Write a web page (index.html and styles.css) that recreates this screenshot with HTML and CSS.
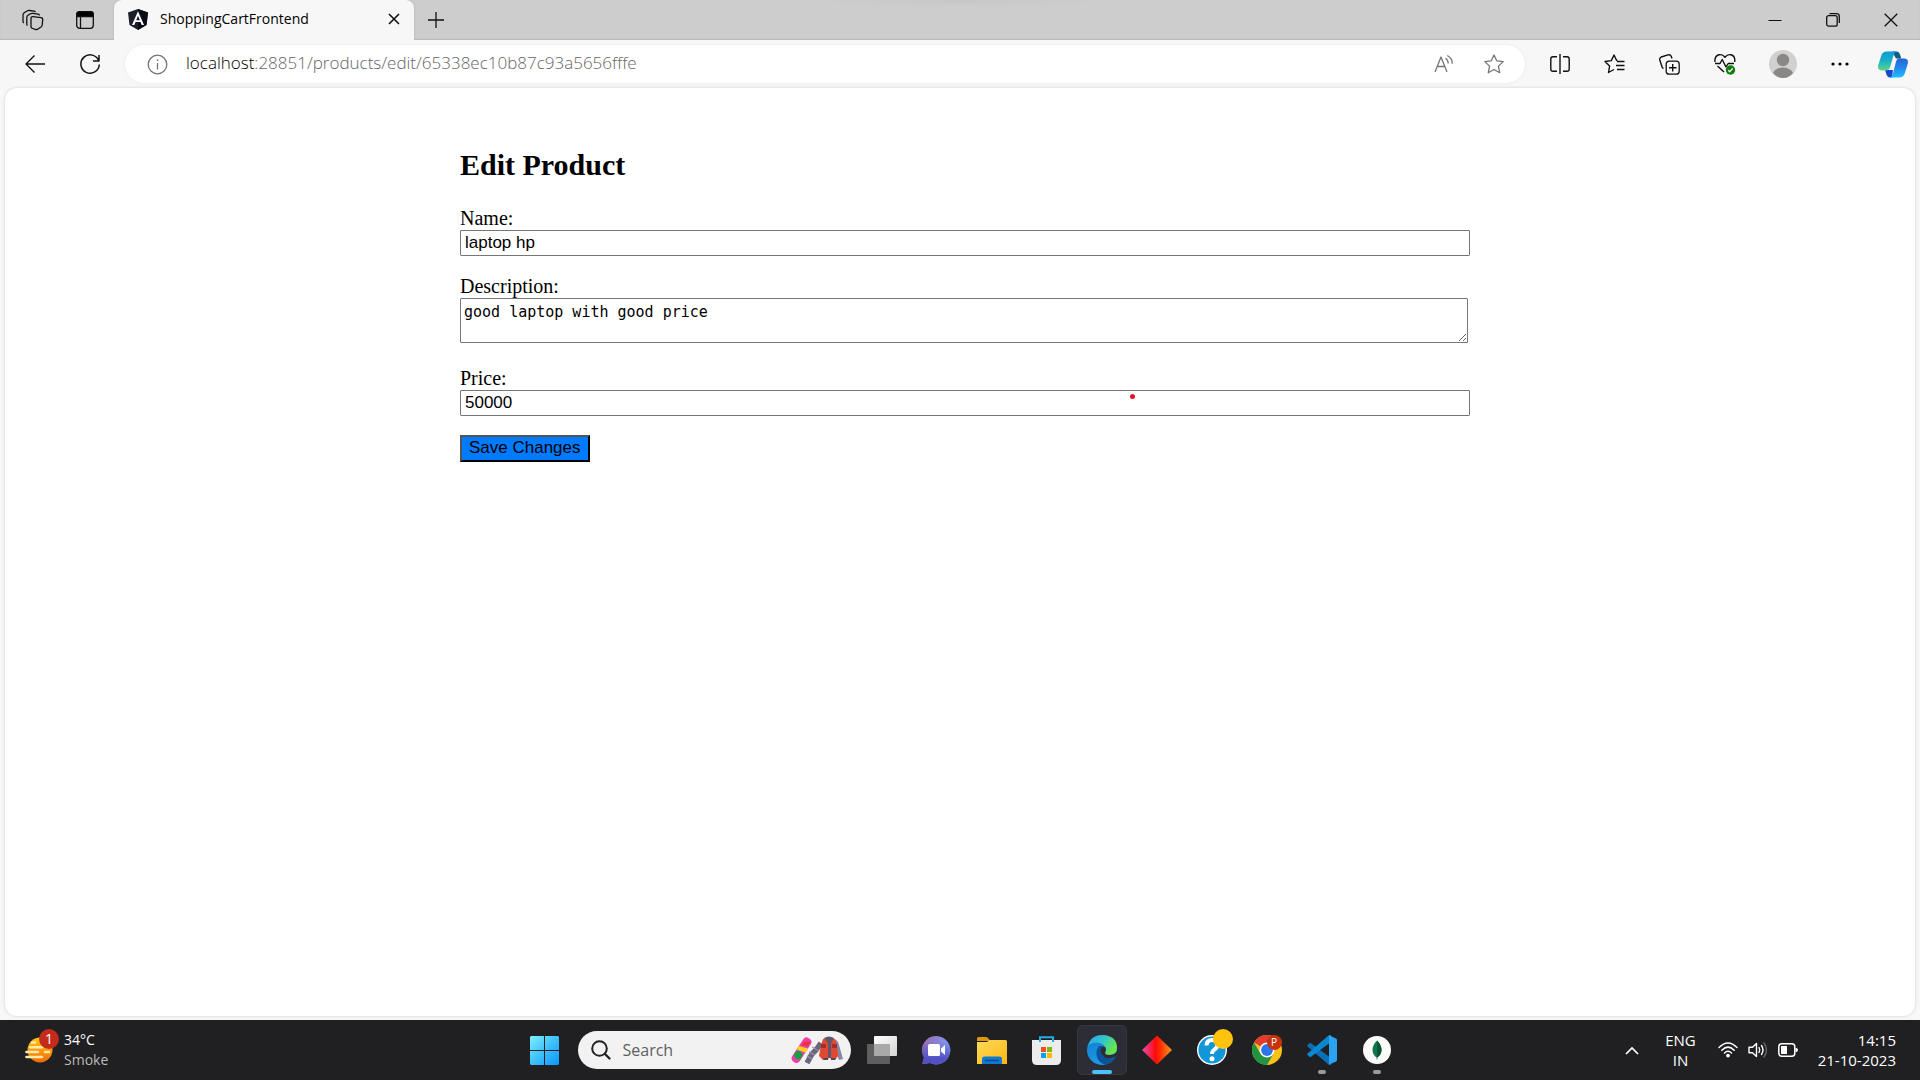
FILE: index.html
```html
<!DOCTYPE html>
<html lang="en">
<head>
<meta charset="utf-8">
<meta name="viewport" content="width=device-width, initial-scale=1">
<title>ShoppingCartFrontend</title>
<link rel="stylesheet" href="styles.css">
</head>
<body>
<div class="screen">
  <header class="browser">
    <div class="tab-strip">
      <div class="strip-tools">
        <button class="icon-button strip-button" type="button" aria-label="Workspaces">
          <svg width="22" height="22" viewBox="0 0 22 22" class="line"><path d="M9 9.500 Q9 7.300 11 7.600 L19 8.700 Q20.900 9 20.700 10.800 L20.200 16 Q20 17.300 19 18 L16 20 Q14.800 20.900 13.300 20.400 L10.500 19.500 Q9 19 9 17.500Z M5.500 16.500 Q4.800 16 4.800 15 V8.500 Q4.800 7 6 6.300 L8.500 4.800 Q9.500 4.200 11 4.400 L16 5.100 Q17.300 5.300 17.500 6.500 M1.800 14 Q1 13.300 1 12.300 V5.800 Q1 4.500 2.200 3.700 L5 2 Q6 1.300 7.500 1.500 L12 2.200 Q13.200 2.400 13.500 3"/></svg>
        </button>
        <button class="icon-button strip-button" type="button" aria-label="Tab actions">
          <svg width="20" height="20" viewBox="0 0 20 20" class="line"><rect x="1.700" y="1.700" width="16.600" height="16.600" rx="3"/><path d="M1.700 6.500 V4.500 Q1.700 1.700 4.500 1.700 H15.500 Q18.300 1.700 18.300 4.500 V6.500Z" fill="#000"/><path d="M5.500 6 V18"/></svg>
        </button>
      </div>
      <div class="tab">
        <svg width="20" height="21" viewBox="0 0 20 21"><path d="M10 0 L20 3.500 L18.500 16 L10 21 L1.500 16 L0 3.500Z" fill="#1b1f2c"/><path d="M10 0 L20 3.500 L18.500 16 L10 21Z" fill="#0b0d16"/><path fill-rule="evenodd" d="M10 2.300 L4 16 H6.300 L7.500 13 H12.500 L13.700 16 H16Z M10 6.700 L11.800 11.200 H8.200Z" fill="#fff"/></svg>
        <span class="tab-title">ShoppingCartFrontend</span>
        <button class="icon-button tab-close" type="button" aria-label="Close tab">
          <svg width="12" height="12" viewBox="0 0 12 12" class="line"><path d="M1 1 L11 11 M11 1 L1 11" stroke-width="1.600"/></svg>
        </button>
      </div>
      <button class="icon-button new-tab" type="button" aria-label="New tab">
        <svg width="18" height="18" viewBox="0 0 18 18" class="line"><path d="M9 1 V17 M1 9 H17"/></svg>
      </button>
      <div class="window-controls">
        <button class="icon-button control" type="button" aria-label="Minimize"><svg width="14" height="14" viewBox="0 0 14 14" class="line"><path d="M0.500 7.500 H13.500" stroke-width="1"/></svg></button>
        <button class="icon-button control" type="button" aria-label="Restore"><svg width="14" height="14" viewBox="0 0 14 14" class="line"><rect x="0.700" y="2.700" width="10.500" height="10.500" rx="2"/><path d="M3.500 0.700 H10.500 Q13.300 0.700 13.300 3.500 V10"/></svg></button>
        <button class="icon-button control" type="button" aria-label="Close"><svg width="14" height="14" viewBox="0 0 14 14" class="line"><path d="M0.700 0.700 L13.300 13.300 M13.300 0.700 L0.700 13.300"/></svg></button>
      </div>
    </div>

    <div class="toolbar">
      <button class="icon-button tool" type="button" aria-label="Back"><svg width="20" height="20" viewBox="0 0 20 20" class="line"><path d="M9.500 1.500 L1 10 L9.500 18.500 M1 10 H20" stroke-width="1.400"/></svg></button>
      <button class="icon-button tool" type="button" aria-label="Refresh"><svg width="22" height="22" viewBox="0 0 22 22" class="line"><path d="M19.800 8 A9.200 9.200 0 1 0 20.300 11.500 M20 2 V8 H14" stroke-width="1.500"/></svg></button>
      <div class="address">
        <svg width="21" height="21" viewBox="0 0 21 21" class="line muted"><circle cx="10.500" cy="10.500" r="9.300"/><path d="M10.500 9 V15.500"/><path d="M10.500 5.500 V7" stroke-width="1.600"/></svg>
        <div class="url" role="textbox" aria-label="Address" contenteditable="true" spellcheck="false"><span class="host">localhost</span>:28851/products/edit/65338ec10b87c93a5656fffe</div>
        <button class="icon-button address-button" type="button" aria-label="Read aloud"><svg width="20" height="20" viewBox="0 0 20 20" class="line muted"><path d="M1 18 L7 3 L13 18 M3.200 12.500 H10.800 M11.500 4.200 Q14.300 6 14.200 9.500 M13.300 1.500 Q18.500 4.200 18.200 9.700"/></svg></button>
        <button class="icon-button address-button" type="button" aria-label="Add to favorites"><svg width="20" height="20" viewBox="0 0 20 20" class="line muted"><path d="M10 1 L12.700 6.800 L19.200 7.600 L14.400 12.100 L15.700 18.700 L10 15.500 L4.300 18.700 L5.600 12.100 L0.800 7.600 L7.300 6.800Z"/></svg></button>
      </div>
      <button class="icon-button tool" type="button" aria-label="Split screen"><svg width="20" height="20" viewBox="0 0 20 20" class="line"><path d="M7 2.700 H3 Q0.800 2.700 0.800 5 V15 Q0.800 17.300 3 17.300 H7 M13 2.700 H17 Q19.200 2.700 19.200 5 V15 Q19.200 17.300 17 17.300 H13 M10 0 V20" stroke-width="1.400"/></svg></button>
      <button class="icon-button tool" type="button" aria-label="Favorites"><svg width="21" height="20" viewBox="0 0 21 20" class="line"><path d="M13.500 6.500 L12.500 6.300 L10 1 L7.300 6.600 L1 7.500 L5.600 12 L4.500 18.500 L10 15.500 M13 7.500 H20.500 M12 11.500 H20.500 M13 15.500 H20.500" stroke-width="1.400"/></svg></button>
      <button class="icon-button tool" type="button" aria-label="Collections"><svg width="21" height="21" viewBox="0 0 21 21" class="line"><rect x="7.200" y="7.200" width="13" height="13" rx="3"/><path d="M13.700 10 V17.500 M10 13.700 H17.500 M4.500 14.500 Q3.300 14 3 12.800 L0.800 6 Q0.300 4 2.200 3 L9 0.900 Q11.300 0.300 12.200 2.200 L13 4.500" stroke-width="1.400"/></svg></button>
      <button class="icon-button tool" type="button" aria-label="Browser essentials"><svg width="22" height="22" viewBox="0 0 22 22" class="line"><path d="M1 9 Q0.300 3 5 1.800 Q8.500 1 11 4.200 Q13.500 1 17 1.800 Q21.500 3 20.700 9 M1 10.500 H6 L8.200 6.500 L12 14 L14.200 10.500 H20 M3.500 13 L10 19" stroke-width="1.400"/><circle cx="16.500" cy="17" r="4.700" fill="#107c10" stroke="none"/><path d="M14.200 17.300 L15.800 18.700 L18.700 15.300" stroke="#fff"/></svg></button>
      <button class="icon-button profile" type="button" aria-label="Profile"><svg width="28" height="28" viewBox="0 0 28 28"><circle cx="14" cy="14" r="14" fill="#d2d0ce"/><circle cx="14" cy="10" r="6.200" fill="#8a8886"/><path d="M4 23 Q7 17.500 14 17.500 Q21 17.500 24 23 Q20 28 14 28 Q8 28 4 23Z" fill="#8a8886"/></svg></button>
      <button class="icon-button more" type="button" aria-label="Settings and more"><svg width="18" height="4" viewBox="0 0 18 4"><circle cx="2" cy="2" r="1.600"/><circle cx="9" cy="2" r="1.600"/><circle cx="16" cy="2" r="1.600"/></svg></button>
      <button class="icon-button copilot" type="button" aria-label="Copilot">
        <svg width="30" height="27" viewBox="0 0 30 27">
          <defs>
            <linearGradient id="cp1" x1="0" y1="0" x2="0" y2="1"><stop offset="0" stop-color="#0a9bd6"/><stop offset=".5" stop-color="#1cb0c4"/><stop offset="1" stop-color="#5fd68c"/></linearGradient>
            <linearGradient id="cp2" x1="0" y1="0" x2="0" y2="1"><stop offset="0" stop-color="#2864d2"/><stop offset=".5" stop-color="#2486ee"/><stop offset="1" stop-color="#1cc0fa"/></linearGradient>
          </defs>
          <path d="M14 0.500 H18.500 Q21 0.500 22 3.500 L23.300 7.500 H18Z" fill="#135c86"/>
          <path d="M7 19 H15 L14 26.500 H12 Q9.500 26.500 8.500 23.500Z" fill="#1748cf"/>
          <path d="M9 0.500 H18.500 Q16.500 1 15.500 4.500 L12.300 15.500 Q11.300 19.500 8 19.500 H4 Q-1 19.500 0.300 14 L3.300 4.500 Q4.500 0.500 9 0.500Z" fill="url(#cp1)"/>
          <path d="M21 7.500 H26 Q31 7.500 29.700 13 L26.700 22.500 Q25.500 26.500 21 26.500 H12 Q14 25.500 15 22.500 L17.800 11.500 Q18.800 7.500 21 7.500Z" fill="url(#cp2)"/>
        </svg>
      </button>
    </div>
  </header>

  <main class="viewport">
    <section class="page">
      <h2 class="page-title">Edit Product</h2>
      <form class="form">
        <div class="field">
          <label for="name">Name:</label>
          <input class="text-input" id="name" type="text" value="laptop hp">
        </div>
        <div class="field field-area">
          <label for="description">Description:</label>
          <textarea class="text-area" id="description" rows="2" spellcheck="false">good laptop with good price</textarea>
        </div>
        <div class="field price-field">
          <label for="price">Price:</label>
          <input class="text-input" id="price" type="text" value="50000">
          <span class="pointer-dot"></span>
        </div>
        <button class="save" type="submit">Save Changes</button>
      </form>
    </section>
  </main>

  <footer class="taskbar">
    <button class="weather" type="button">
      <span class="weather-icon">
        <svg width="30" height="28" viewBox="0 0 30 28"><defs><linearGradient id="sun" x1="0" y1="0" x2="0" y2="1"><stop offset="0" stop-color="#ffc90e"/><stop offset="1" stop-color="#f26a0c"/></linearGradient></defs><circle cx="15" cy="14" r="12.500" fill="url(#sun)"/><path d="M7 6.500 H10 M5 11.200 H17 M1.500 16 H13 M20 16 H24 M1.500 21 H17" stroke="#ffe9a8" stroke-width="2.600" stroke-linecap="round"/></svg>
        <span class="badge">1</span>
      </span>
      <span class="weather-text"><span>34°C</span><span class="dim">Smoke</span></span>
    </button>

    <div class="dock">
      <button class="app" type="button" aria-label="Start"><svg width="29" height="29" viewBox="0 0 29 29"><defs><linearGradient id="win" x1="0" y1="0" x2="1" y2="1"><stop offset="0" stop-color="#7ff0ff"/><stop offset=".5" stop-color="#3fc0fa"/><stop offset="1" stop-color="#0a96ff"/></linearGradient></defs><path d="M1 0 H14 V14 H0 V1Z M15 0 H28 L29 1 V14 H15Z M0 15 H14 V29 H1 L0 28Z M15 15 H29 V28 L28 29 H15Z" fill="url(#win)"/></svg></button>
      <div class="search">
        <svg width="20" height="20" viewBox="0 0 20 20"><g fill="none" stroke="#222" stroke-width="2" stroke-linecap="round"><circle cx="8.500" cy="8.500" r="7.300"/><path d="M14 14 L18.500 18.500" stroke-width="2.400"/></g></svg>
        <input class="search-input" type="text" placeholder="Search" aria-label="Search">
        <svg width="53" height="29" viewBox="0 0 53 29">
          <g transform="rotate(33 11 15)"><rect x="6.500" y="0" width="9" height="28" rx="4" fill="#ee3fa6"/><path d="M6.500 12 L15.500 9 V14 L6.500 16Z" fill="#ffd21f"/><path d="M9 5 L14 2 V7 L8 10Z" fill="#e8333c"/><circle cx="11" cy="20" r="4" fill="#12a045"/></g>
          <path d="M31 7 L26 14 L22 18 L17 27" fill="none" stroke="#6a647c" stroke-width="5.500"/>
          <path d="M22 11 L29 15 M19 16 L25 19 M17 20 L22 23" stroke="#9a94aa" stroke-width="1.200"/>
          <path d="M44 3 Q48 4 49 9 L53 23 L49 24 L45 14Z" fill="#8b86a2"/>
          <path d="M33 3 L36 2 L39 6 V22 L37 24 H33 L29 20 L31 9Z M45 3 L42 2 L40 6 V22 L42 24 H45 L48 20 L47 9Z" fill="#e0492f"/>
          <path d="M34 2 Q39 -1 44 2 L41 7 V22 H38 V7Z" fill="#5d5870"/><path d="M31 8 H36 V12 H31Z M42 8 H47 V12 H42Z" fill="#9a3232"/><path d="M33 22 H38 V24 H34Z M41 22 H46 L45 24 H41Z" fill="#4d4960"/>
        </svg>
      </div>
      <button class="app" type="button" aria-label="Task view"><svg width="30" height="28" viewBox="0 0 30 28"><defs><linearGradient id="tv" x1="0" y1="0" x2="1" y2="1"><stop offset="0" stop-color="#fff"/><stop offset="1" stop-color="#d4d4d4"/></linearGradient></defs><rect x="7" width="23" height="20" rx="1" fill="url(#tv)"/><rect y="8" width="23" height="20" rx="1" fill="#5e5e5e"/><rect x="7" y="8" width="16" height="12" fill="#a9a9a9"/></svg></button>
      <button class="app" type="button" aria-label="Chat"><svg width="29" height="29" viewBox="0 0 29 29"><defs><linearGradient id="chat" x1="0" y1="0" x2="1" y2="0.300"><stop offset="0" stop-color="#9a67ae"/><stop offset="1" stop-color="#7e9cf5"/></linearGradient><linearGradient id="chat2" x1="0" y1="0" x2="0" y2="1"><stop offset=".2" stop-color="#5350c4" stop-opacity="0"/><stop offset=".8" stop-color="#5350c4"/></linearGradient></defs><path id="bubble" d="M14.500 0 A14.200 14.200 0 1 1 8 27 L1 28 Q0 28 0.600 26.800 L2 21.500 A14.200 14.200 0 0 1 14.500 0Z" fill="url(#chat)"/><path d="M14.500 0 A14.200 14.200 0 1 1 8 27 L1 28 Q0 28 0.600 26.800 L2 21.500 A14.200 14.200 0 0 1 14.500 0Z" fill="url(#chat2)"/><rect x="6" y="8" width="12" height="12" rx="1.500" fill="#fff"/><path d="M19 12.500 L23 9 V19 L19 15.500Z" fill="#fff"/></svg></button>
      <button class="app" type="button" aria-label="File Explorer"><svg width="30" height="27" viewBox="0 0 30 27"><defs><linearGradient id="fold" x1="0" y1="0" x2="1" y2="1"><stop offset="0" stop-color="#ffda5c"/><stop offset="1" stop-color="#fdb813"/></linearGradient></defs><path d="M0 1.500 Q0 0 1.500 0 H9 Q10 0 11 1 L13.500 4 H0Z" fill="#dc9a0a"/><path d="M0 5 H10 L12.500 3 H28.500 Q30 3 30 4.500 V27 H0Z" fill="url(#fold)"/><path d="M5 27 V22 Q5 19.500 7.500 19.500 H22.500 Q25 19.500 25 22 V27Z" fill="#1279d0"/><path d="M8 23.500 H22" stroke="#0a4a8e" stroke-width="1.400"/></svg></button>
      <button class="app" type="button" aria-label="Microsoft Store"><svg width="29" height="29" viewBox="0 0 29 29"><path d="M0 4 H29 V24 Q29 29 24 29 H5 Q0 29 0 24Z" fill="#ececec"/><path d="M8 6 V1.200 H21 V6" fill="none" stroke="#22aee4" stroke-width="2"/><path d="M9 11 H14 V16 H9Z" fill="#f25022"/><path d="M15 11 H20 V16 H15Z" fill="#7fba00"/><path d="M9 17 H14 V22 H9Z" fill="#00a4ef"/><path d="M15 17 H20 V22 H15Z" fill="#ffb900"/></svg></button>
      <button class="app active" type="button" aria-label="Microsoft Edge"><svg width="30" height="30" viewBox="0 0 30 30"><defs><linearGradient id="ed1" x1="0" y1="0" x2="1" y2="0.500"><stop offset="0" stop-color="#2aa4de"/><stop offset=".5" stop-color="#2fc3cf"/><stop offset="1" stop-color="#6be64a"/></linearGradient><linearGradient id="ed2" x1="0" y1="0" x2="0.400" y2="1"><stop offset="0" stop-color="#1378ce"/><stop offset="1" stop-color="#1b9de6"/></linearGradient></defs><circle cx="15" cy="15" r="15" fill="url(#ed2)"/><path d="M0.800 11 Q4 0 15 0 Q29.500 0.500 30 12 Q30 20 22 20 Q18 20 18 17.500 Q19.500 16 19 13.500 Q17 8 10 7.500 Q4 7.500 0.800 11Z" fill="url(#ed1)"/><path d="M12 11 Q8 16 10 22 Q12 28 18 29.700 Q25 29 28.500 22 Q24 25 19 23 Q14 21 14 16 Q14 13 16 11Z" fill="#0b549c"/><path d="M16 11.300 Q12.500 14 14 18 Q16.500 24 23 23.600 Q27 23 28.500 21.800 L30 19.500 V16 Q28 20 22 20 Q18 20 18 17.500 Q19.800 15 18.500 12.500Z" fill="#2d2d38"/></svg></button>
      <button class="app" type="button" aria-label="Diamond app"><svg width="30" height="30" viewBox="0 0 30 30"><defs><linearGradient id="dia"><stop offset="0" stop-color="#e64cb8"/><stop offset=".45" stop-color="#ff0a0a"/><stop offset=".6" stop-color="#ff2a00"/><stop offset="1" stop-color="#ff9a1a"/></linearGradient></defs><path d="M15 0.500 L30 15 L15 29.500 L0 15Z" fill="url(#dia)"/></svg></button>
      <button class="app help" type="button" aria-label="Help"><svg width="30" height="30" viewBox="0 0 30 30"><circle cx="15" cy="15" r="14.300" fill="#1296d8" stroke="#fff" stroke-width="1.400"/><path d="M9.500 10.500 Q9.500 5 15 5 Q20.500 5 20.500 9.800 Q20.500 12.500 17.500 14.500 Q15 16.300 15 19" fill="none" stroke="#fff" stroke-width="4"/><circle cx="15" cy="23.800" r="2.500" fill="#fff"/></svg><span class="help-dot"></span></button>
      <button class="app chrome" type="button" aria-label="Google Chrome"><svg width="30" height="30" viewBox="0 0 30 30"><circle cx="15" cy="15" r="15" fill="#fbc116"/><path d="M15 15 L2 7.500 A15 15 0 0 1 28 7.500 H15Z" fill="#e33b2e"/><path d="M15 15 L8.500 18.700 L2 7.500 A15 15 0 0 0 15 30 L21.500 18.700Z" fill="#229342"/><circle cx="15" cy="15" r="7.500" fill="#fff"/><circle cx="15" cy="15" r="5.900" fill="#2f74e8"/></svg><span class="chrome-badge">P</span></button>
      <button class="app running" type="button" aria-label="Visual Studio Code"><svg width="30" height="30" viewBox="0 0 30 30"><path d="M0.500 10 L2.500 8.200 Q3.200 7.800 4 8.300 L24 23 V30 L21.500 29.500 L0.500 11.500 Q0 10.800 0.500 10Z" fill="#0b6fb8"/><path d="M0.500 20 L2.500 21.800 Q3.200 22.200 4 21.700 L24 7 V0 L21.500 0.500 L0.500 18.500 Q0 19.200 0.500 20Z" fill="#0b86d0"/><path d="M22 0.300 L29 3.500 Q30 4 30 5 V25 Q30 26 29 26.500 L22 29.700 V0.300Z" fill="#2aa3f0"/></svg></button>
      <button class="app running" type="button" aria-label="MongoDB Compass"><svg width="28" height="28" viewBox="0 0 28 28"><circle cx="14" cy="14" r="14" fill="#fbfbfa"/><path d="M14 4.500 Q18.500 9 18.500 14 Q18.500 18.500 14.400 21.500 V23.500 H13.600 V21.500 Q9.500 18.500 9.500 14 Q9.500 9 14 4.500Z" fill="#11764c"/><path d="M14 4.500 Q18.500 9 18.500 14 Q18.500 18.500 14 21.500Z" fill="#0a5436"/></svg></button>
    </div>

    <div class="tray">
      <svg width="14" height="9" viewBox="0 0 14 9"><path d="M1 8 L7 2 L13 8" fill="none" stroke="#fff" stroke-width="1.700"/></svg>
      <div class="language"><span>ENG</span><span>IN</span></div>
      <div class="status">
        <svg width="20" height="16" viewBox="0 0 20 16"><g fill="none" stroke="#fff" stroke-width="1.500" stroke-linecap="round"><path d="M1 5.500 Q10 -3.500 19 5.500 M3.800 8.200 Q10 2 16.200 8.200 M6.500 11 Q10 7.600 13.500 11"/></g><circle cx="10" cy="13.600" r="1.900" fill="#fff"/></svg>
        <svg width="20" height="18" viewBox="0 0 20 18"><g fill="none" stroke="#fff" stroke-width="1.400" stroke-linecap="round" stroke-linejoin="round"><path d="M1 6.300 H4.500 L8.500 2.500 V15.500 L4.500 11.700 H1Z M11 6.500 Q12.500 9 11 11.500 M13.500 4.500 Q16.500 9 13.500 13.500"/><path d="M16 2 Q21 9 16 16" stroke="#666"/></g></svg>
        <svg width="20" height="14" viewBox="0 0 20 14"><rect x="0.800" y="0.800" width="16" height="12.400" rx="3" fill="none" stroke="#fff" stroke-width="1.500"/><path d="M3 3 H9 V11 H3Z M17.500 5 H18.500 Q20 5.500 20 7 Q20 8.500 18.500 9 H17.500Z" fill="#fff"/></svg>
      </div>
      <div class="clock"><time>14:15</time><time datetime="2023-10-21">21-10-2023</time></div>
    </div>
  </footer>
</div>
</body>
</html>
```
FILE: styles.css
```css
body {
  margin: 0;
  background: #f7f7f7;
  color: #000;
  font-family: "Liberation Serif", "Times New Roman", serif;
  font-size: 20px;
}

button {
  font: inherit;
}

.screen {
  display: flex;
  flex-direction: column;
  min-height: 100vh;
}

.line {
  fill: none;
  stroke: #111;
  stroke-width: 1.3;
  stroke-linejoin: round;
}

.muted {
  stroke: #757575;
}

.icon-button {
  display: flex;
  align-items: center;
  justify-content: center;
  padding: 0;
  border: 0;
  background: none;
}

/* Browser chrome */
.browser,
.taskbar {
  font-family: "Open Sans", "Noto Sans", sans-serif;
}

.tab-strip {
  display: flex;
  height: 40px;
  background: radial-gradient(150px 8px at top, #c6c6c6, #cdcdcd) #cdcdcd;
  box-shadow: inset 0 -1px 1px #b9b9b9;
}

.strip-tools {
  display: flex;
  padding: 0 3px 0 7px;
}

.strip-button {
  width: 52px;
}

.tab {
  display: flex;
  align-items: center;
  gap: 12px;
  box-sizing: border-box;
  width: 300px;
  padding: 0 10px 2px 14px;
  border-radius: 8px 8px 0 0;
  background: #f7f7f7;
  box-shadow: 0 0 2px #aaa;
  clip-path: inset(0 -3px 0 -3px);
}

.tab-title {
  flex: 1;
  font-size: 14px;
  line-height: 20px;
}

.tab-close {
  width: 20px;
  height: 20px;
}

.new-tab {
  width: 44px;
}

.window-controls {
  display: flex;
  margin-left: auto;
}

.control {
  width: 58px;
}

.toolbar {
  display: flex;
  align-items: center;
  height: 48px;
  padding-left: 7px;
  background: #f7f7f7;
}

.tool {
  width: 55px;
  height: 38px;
}

.profile {
  width: 62px;
}

.more {
  width: 52px;
}

.copilot {
  width: 54px;
}

.address {
  display: flex;
  flex: 1;
  align-items: center;
  box-sizing: border-box;
  height: 38px;
  margin: 0 7px 0 8px;
  padding: 0 6px 0 22px;
  border-radius: 19px;
  background: #fff;
  box-shadow: 0 0 3px #e6e6e6;
}

.url {
  flex: 1;
  margin-left: 18px;
  padding-bottom: 2px;
  color: #666;
  font-size: 17px;
  font-weight: 300;
  line-height: 24px;
}

.host {
  color: #000;
}

.address-button {
  width: 50px;
}

/* Page */
.viewport {
  flex: 1;
  margin: 0 5px 4px;
  border-radius: 12px;
  background: #fff;
  box-shadow: 0 0 3px #ccc;
}

.page {
  max-width: 1000px;
  margin: 0 auto;
  padding: 60px 0;
}

.page-title {
  margin: 0 0 25px;
  font-size: 30px;
  line-height: 34px;
}

.form {
  display: flex;
  flex-direction: column;
  align-items: flex-start;
  gap: 19px;
}

.field {
  display: flex;
  flex-direction: column;
  align-items: flex-start;
  width: 100%;
  line-height: 23px;
}

.field-area {
  padding-bottom: 5px;
}

.text-input,
.text-area {
  width: 100%;
  margin: 0;
  border: 1px solid #767676;
  border-radius: 1px;
  background: #fff;
  color: #000;
}

.text-input {
  height: 20px;
  padding: 2px 4px;
  font: 17px/20px "Liberation Sans", Arial, sans-serif;
}

.text-area {
  height: 37px;
  padding: 3px;
  font: 15px/20px "DejaVu Sans Mono", monospace;
}

.price-field {
  position: relative;
}

.pointer-dot {
  position: absolute;
  top: 27px;
  left: 67%;
  width: 5px;
  height: 5px;
  border-radius: 50%;
  background: #e81123;
}

.save {
  height: 27px;
  padding: 0 7px 2px;
  border: 2px outset #000;
  border-radius: 0;
  background: #007bff;
  color: #000;
  font: 17px/20px "Liberation Sans", Arial, sans-serif;
}

/* Taskbar */
.taskbar {
  display: grid;
  grid-template-columns: 1fr auto 1fr;
  align-items: center;
  height: 60px;
  background: #202022;
  color: #fff;
  font-size: 15px;
  line-height: 20px;
}

.weather {
  display: flex;
  align-items: center;
  gap: 9px;
  justify-self: start;
  padding: 0 0 0 25px;
  border: 0;
  background: none;
  color: #fff;
  font-size: 14px;
  text-align: left;
}

.weather-icon {
  position: relative;
  display: flex;
}

.badge {
  position: absolute;
  top: -7px;
  right: -4px;
  width: 20px;
  height: 20px;
  border-radius: 50%;
  background: #c42b1c;
  text-align: center;
}

.weather-text,
.language,
.clock {
  display: flex;
  flex-direction: column;
}

.dim {
  color: #bbb;
}

.dock {
  display: flex;
  align-items: center;
}

.app {
  position: relative;
  display: flex;
  align-items: center;
  justify-content: center;
  width: 50px;
  height: 50px;
  margin: 0 2px 0 3px;
  padding: 0;
  border: 0;
  border-radius: 6px;
  background: none;
}

.active {
  background: #2d2d38;
  box-shadow: inset 0 0 0 1px #373740;
}

.active::after,
.running::after {
  content: "";
  position: absolute;
  bottom: 1px;
  width: 8px;
  height: 4px;
  border-radius: 2px;
  background: #9a9a9c;
}

.active::after {
  width: 20px;
  background: #4cc2ff;
}

.search {
  display: flex;
  align-items: center;
  gap: 12px;
  box-sizing: border-box;
  width: 273px;
  height: 38px;
  margin: 0 3px 0 6px;
  padding: 0 8px 0 13px;
  border-radius: 19px;
  background: #f2f2f2;
}

.search-input {
  flex: 1;
  min-width: 0;
  padding: 0;
  border: 0;
  background: none;
  font: 16px/24px "Open Sans", "Noto Sans", sans-serif;
}

.search-input::placeholder {
  color: #5f5f5f;
}

.help-dot {
  position: absolute;
  top: 4px;
  right: 4px;
  width: 20px;
  height: 20px;
  border-radius: 50%;
  background: #ffc20e;
}

.chrome-badge {
  position: absolute;
  top: 10px;
  right: 10px;
  width: 15px;
  height: 15px;
  border-radius: 50%;
  background: #c5320c;
  color: #fff;
  font-size: 10px;
  line-height: 15px;
  text-align: center;
}

.tray {
  display: flex;
  align-items: center;
  justify-self: end;
  padding-right: 24px;
}

.language {
  align-items: center;
  margin: 0 22px 0 26px;
}

.status {
  display: flex;
  align-items: center;
  gap: 10px;
  margin-right: 20px;
}

.clock {
  align-items: flex-end;
}
```
